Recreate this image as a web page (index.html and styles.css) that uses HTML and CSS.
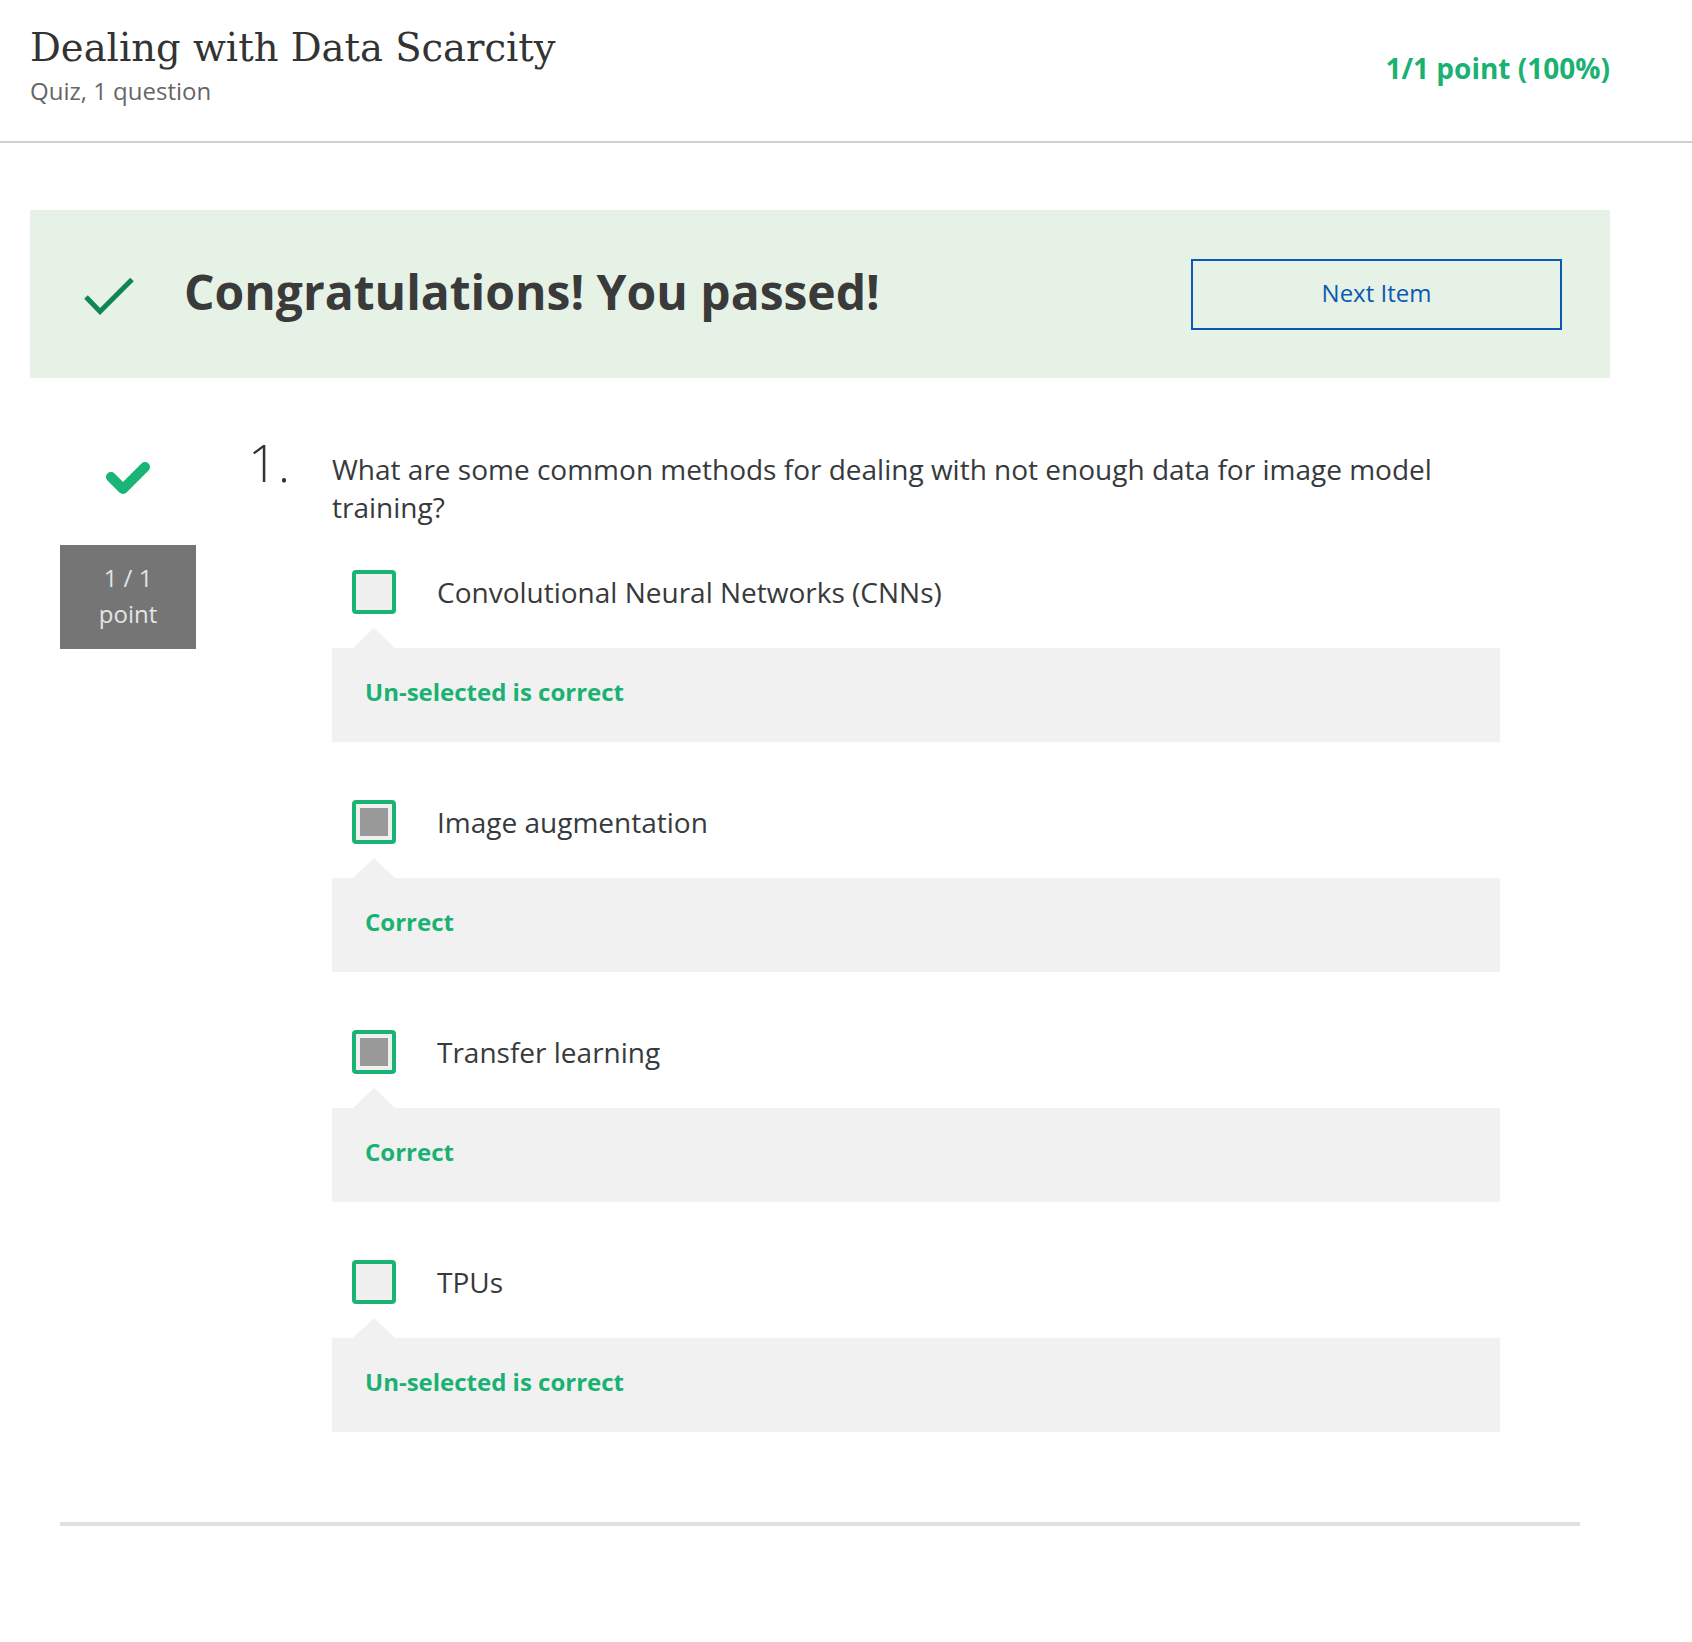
FILE: index.html
```html
<!DOCTYPE html>
<html lang="en">
<head>
<meta charset="utf-8">
<title>Dealing with Data Scarcity</title>
<link rel="stylesheet" href="styles.css">
</head>
<body>
<header class="header">
  <div class="header-left">
    <h1 class="title">Dealing with Data Scarcity</h1>
    <div class="subtitle">Quiz, 1 question</div>
  </div>
  <div class="score">1/1 point (100%)</div>
</header>

<main class="main">
  <section class="banner">
    <svg class="banner-check" width="50" height="40" viewBox="0 0 50 40" aria-hidden="true">
      <path d="M2 22 L16 36.5 L48 4.5" fill="none" stroke="#118556" stroke-width="5"/>
    </svg>
    <h2 class="banner-title">Congratulations! You passed!</h2>
    <button class="next-btn" type="button">Next Item</button>
  </section>

  <section class="question">
    <div class="q-left">
      <svg class="q-check" width="48" height="40" viewBox="0 0 48 40" aria-hidden="true">
        <path d="M7 21 L19 33 L41 11" fill="none" stroke="#19b476" stroke-width="10" stroke-linecap="round" stroke-linejoin="round"/>
      </svg>
      <div class="points">1 / 1<br>point</div>
    </div>
    <div class="q-num">1.</div>
    <div class="q-body">
      <p class="q-text">What are some common methods for dealing with not enough data for image model training?</p>

      <div class="option">
        <div class="opt-row">
          <span class="box"></span>
          <span class="opt-label">Convolutional Neural Networks (CNNs)</span>
        </div>
        <div class="feedback">Un-selected is correct</div>
      </div>

      <div class="option">
        <div class="opt-row">
          <span class="box checked"></span>
          <span class="opt-label">Image augmentation</span>
        </div>
        <div class="feedback">Correct</div>
      </div>

      <div class="option">
        <div class="opt-row">
          <span class="box checked"></span>
          <span class="opt-label">Transfer learning</span>
        </div>
        <div class="feedback">Correct</div>
      </div>

      <div class="option">
        <div class="opt-row">
          <span class="box"></span>
          <span class="opt-label">TPUs</span>
        </div>
        <div class="feedback">Un-selected is correct</div>
      </div>
    </div>
  </section>

  <hr class="sep">
</main>
</body>
</html>
```
FILE: styles.css
```css
* { box-sizing: border-box; }

html, body {
  margin: 0;
  padding: 0;
  background: #fff;
}

body {
  font-family: "Open Sans", "Liberation Sans", Arial, sans-serif;
  color: #373a3c;
}

.header {
  display: flex;
  justify-content: space-between;
  align-items: flex-start;
  height: 143px;
  padding: 23px 82px 0 30px;
  border-bottom: 2px solid #cfcfcf;
}

.title {
  margin: 0;
  font-family: "DejaVu Serif", "Liberation Serif", serif;
  font-weight: 400;
  font-size: 38.5px;
  line-height: 50px;
  color: #333;
}

.subtitle {
  margin-top: 3px;
  font-size: 24px;
  line-height: 30px;
  color: #666;
}

.score {
  margin-top: 27px;
  font-size: 28px;
  line-height: 36px;
  font-weight: 700;
  color: #1ab173;
}

.main {
  padding: 0 82px 0 30px;
}

.banner {
  display: flex;
  align-items: center;
  height: 168px;
  margin-top: 67px;
  padding: 0 48px 0 54px;
  background: #e7f2e7;
}

.banner-check {
  flex: none;
  margin-right: 50px;
  margin-top: 2px;
}

.banner-title {
  flex: 1;
  margin: 0 0 4px 0;
  font-size: 48px;
  line-height: 60px;
  font-weight: 700;
  color: #3a3a3a;
}

.next-btn {
  flex: none;
  width: 371px;
  height: 71px;
  border: 2px solid #0a5ab3;
  background: transparent;
  font-family: "Open Sans", "Liberation Sans", Arial, sans-serif;
  font-size: 24px;
  color: #0a5ab3;
  padding: 0 0 4px 0;
}

.question {
  display: flex;
  align-items: flex-start;
  margin-top: 72px;
  padding-left: 30px;
}

.q-left {
  flex: none;
  width: 136px;
  display: flex;
  flex-direction: column;
  align-items: center;
}

.q-check {
  margin-top: 6px;
  display: block;
}

.points {
  margin-top: 49px;
  width: 136px;
  height: 104px;
  padding-top: 15px;
  background: #757575;
  color: #e4e4e4;
  font-size: 24px;
  line-height: 36px;
  text-align: center;
}

.q-num {
  flex: none;
  width: 84px;
  margin-left: 52px;
  font-size: 52px;
  font-weight: 300;
  line-height: 24px;
  color: #333;
}

.q-body {
  flex: none;
  width: 1168px;
}

.q-text {
  margin: 0;
  font-size: 28px;
  line-height: 38px;
  color: #373a3c;
}

.option {
  margin-top: 44px;
}

.option + .option {
  margin-top: 58px;
}

.opt-row {
  display: flex;
  align-items: center;
  padding-left: 20px;
}

.box {
  flex: none;
  width: 44px;
  height: 44px;
  border: 4px solid #1bb374;
  border-radius: 4px;
  background: #f0f0f0;
  padding: 4px;
  margin-right: 41px;
}

.box.checked::after {
  content: "";
  display: block;
  width: 28px;
  height: 28px;
  background: #999;
}

.opt-label {
  font-size: 28px;
  line-height: 37px;
  color: #373a3c;
}

.feedback {
  position: relative;
  margin-top: 34px;
  height: 94px;
  padding: 29px 0 0 33px;
  background: #f1f1f1;
  font-size: 24px;
  line-height: 30px;
  font-weight: 700;
  color: #1ab173;
}

.feedback::before {
  content: "";
  position: absolute;
  left: 21px;
  top: -20px;
  border-left: 21px solid transparent;
  border-right: 21px solid transparent;
  border-bottom: 20px solid #f1f1f1;
}

.sep {
  margin: 90px 30px 0 30px;
  height: 4px;
  border: 0;
  background: #e0e0e0;
}
```
